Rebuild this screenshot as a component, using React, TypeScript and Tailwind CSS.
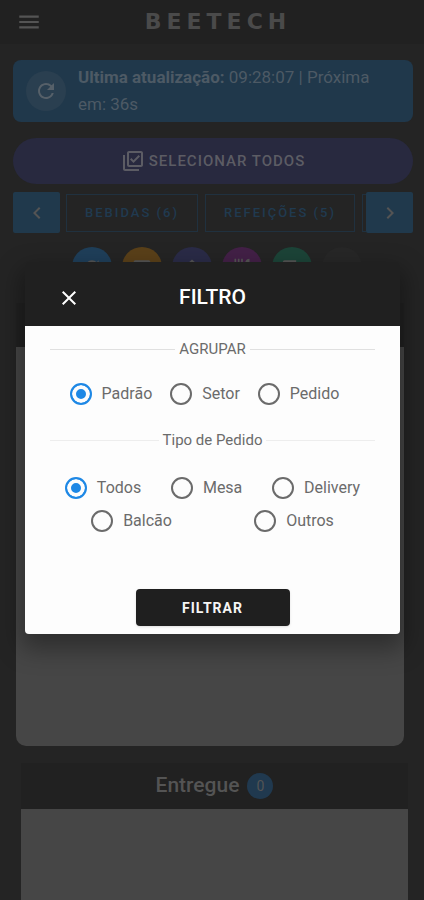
import { useState } from 'react';
import type { ReactNode } from 'react';
import {
  MdChevronLeft,
  MdChevronRight,
  MdClose,
  MdCreditCard,
  MdHome,
  MdLocalShipping,
  MdMenu,
  MdMoreHoriz,
  MdOutlineLibraryAddCheck,
  MdRefresh,
  MdRestaurant,
} from 'react-icons/md';

const shortcuts = [
  { label: 'Atualizar', color: 'bg-[#1f3f5a]', icon: MdRefresh },
  { label: 'Pagamentos', color: 'bg-[#5a4019]', icon: MdCreditCard },
  { label: 'Início', color: 'bg-[#2a2b47]', icon: MdHome },
  { label: 'Refeições', color: 'bg-[#432047]', icon: MdRestaurant },
  { label: 'Entregas', color: 'bg-[#1c4438]', icon: MdLocalShipping },
  { label: 'Mais', color: 'bg-[#272727]', icon: MdMoreHoriz },
];

function Tab({ children }: { children: ReactNode }) {
  return (
    <button className="h-[38px] shrink-0 border border-[#20313f] px-[18px] text-[13px] font-medium tracking-[2px] whitespace-nowrap text-[#203a50]">
      {children}
    </button>
  );
}

type RadioProps = {
  name: string;
  label: string;
  value: string;
  onChange: (value: string) => void;
};

function Radio({ name, label, value, onChange }: RadioProps) {
  return (
    <label className="flex h-[33px] items-center gap-[10px]">
      <input
        type="radio"
        name={name}
        checked={value === label}
        onChange={() => onChange(label)}
        className="size-[22px] appearance-none rounded-full border-2 border-[#6b6b6b] checked:border-[#1e88e5] checked:bg-[#1e88e5] checked:shadow-[inset_0_0_0_4px_#fdfdfd]"
      />
      {label}
    </label>
  );
}

function Legend({ children, line }: { children: ReactNode; line: string }) {
  return (
    <legend className="flex h-[22px] w-full items-center gap-1 text-[15px]">
      <span className={`h-px flex-1 ${line}`} />
      {children}
      <span className={`h-px flex-1 ${line}`} />
    </legend>
  );
}

function FilterDialog() {
  const [group, setGroup] = useState('Padrão');
  const [type, setType] = useState('Todos');

  return (
    <div className="fixed inset-0 flex items-center justify-center pr-6 pb-1 pl-[25px]">
      <div
        role="dialog"
        aria-labelledby="filter-title"
        className="w-full max-w-lg rounded-sm shadow-[0_11px_24px_4px_rgba(0,0,0,0.35)]"
      >
        <header className="grid h-16 grid-cols-3 items-center rounded-t-sm bg-[#202020] px-8 pt-2 text-white">
          <button aria-label="Fechar" className="justify-self-start">
            <MdClose className="size-6" />
          </button>
          <h2 id="filter-title" className="text-center text-[21px] font-medium">
            FILTRO
          </h2>
        </header>
        <form
          onSubmit={(e) => e.preventDefault()}
          className="flex flex-col rounded-b-sm bg-[#fdfdfd] px-[25px] pt-3 pb-2 text-[#6b6b6b]"
        >
          <fieldset>
            <Legend line="bg-[#e0e0e0]">AGRUPAR</Legend>
            <div className="mt-[17px] flex justify-center gap-[18px] pr-4">
              {['Padrão', 'Setor', 'Pedido'].map((o) => (
                <Radio key={o} name="group" label={o} value={group} onChange={setGroup} />
              ))}
            </div>
          </fieldset>
          <fieldset className="mt-[19px]">
            <Legend line="bg-[#ededed]">Tipo de Pedido</Legend>
            <div className="mt-5 flex justify-around">
              {['Todos', 'Mesa', 'Delivery'].map((o) => (
                <Radio key={o} name="type" label={o} value={type} onChange={setType} />
              ))}
            </div>
            <div className="flex justify-around">
              {['Balcão', 'Outros'].map((o) => (
                <Radio key={o} name="type" label={o} value={type} onChange={setType} />
              ))}
            </div>
          </fieldset>
          <button
            type="submit"
            className="mt-[52px] h-[37px] w-[154px] self-center rounded-sm bg-[#1f1f1f] text-sm font-bold tracking-[1px] text-[#f5f5f5] shadow"
          >
            FILTRAR
          </button>
        </form>
      </div>
    </div>
  );
}

export default function App() {
  return (
    <div className="font-[Roboto,sans-serif]">
      <div className="flex h-screen flex-col overflow-hidden bg-[#242424] text-[#545454]">
        <header className="grid h-11 shrink-0 grid-cols-[24px_1fr_24px] items-center bg-[#212121] px-4">
          <button aria-label="Menu">
            <MdMenu className="size-[26px]" />
          </button>
          <h1 className="pl-3 text-center font-['DejaVu_Sans',sans-serif] text-[22px] leading-6 font-bold tracking-[5px] text-[#4a4a4a]">
            BEETECH
          </h1>
        </header>

        <main className="flex min-h-0 flex-1 flex-col pt-4">
          <div className="mr-[11px] ml-[13px] flex shrink-0 items-center gap-3 rounded-lg bg-[#20384b] py-1 pr-9 pl-[13px]">
            <button
              aria-label="Atualizar"
              className="flex size-10 shrink-0 items-center justify-center rounded-full bg-[#2a3f50]"
            >
              <MdRefresh className="size-6 text-[#566069]" />
            </button>
            <p className="text-[17px] leading-[27px] text-[#4d5a65]">
              <b>Ultima atualização:</b> 09:28:07 | Próxima em: 36s
            </p>
          </div>

          <button className="mr-[11px] ml-[13px] mt-4 flex h-[46px] shrink-0 items-center justify-center gap-1 rounded-full bg-[#28293f] text-[15px] font-medium tracking-[1px] text-[#5c5c64]">
            <MdOutlineLibraryAddCheck className="size-6" />
            SELECIONAR TODOS
          </button>

          <nav className="mr-[11px] ml-[13px] mt-2 flex h-[41px] shrink-0 items-stretch">
            <button
              aria-label="Anterior"
              className="flex w-[47px] shrink-0 items-center justify-center rounded-xs bg-[#20394c]"
            >
              <MdChevronLeft className="size-6" />
            </button>
            <div className="flex min-w-0 flex-1 items-center gap-[7px] overflow-hidden pl-[6px]">
              <Tab>BEBIDAS (6)</Tab>
              <Tab>REFEIÇÕES (5)</Tab>
              <button
                aria-label="Próxima categoria"
                className="h-[38px] w-32 shrink-0 border border-[#20313f]"
              />
            </div>
            <button
              aria-label="Próximo"
              className="flex w-[47px] shrink-0 items-center justify-center rounded-xs bg-[#20394c]"
            >
              <MdChevronRight className="size-6" />
            </button>
          </nav>

          <div className="mt-[14px] flex shrink-0 justify-center gap-[10px] pl-[10px]">
            {shortcuts.map(({ label, color, icon: Icon }) => (
              <button
                key={label}
                aria-label={label}
                className={`flex size-10 items-center justify-center rounded-full ${color}`}
              >
                <Icon className="size-5" />
              </button>
            ))}
          </div>

          <section className="mt-4 mr-5 ml-4 shrink-0">
            <div className="h-11 bg-[#212121]" />
            <div className="h-[399px] rounded-b-[10px] bg-[#464646]" />
          </section>

          <section className="mt-[17px] mr-4 ml-[21px] flex min-h-0 flex-1 flex-col">
            <h2 className="flex h-[46px] shrink-0 items-center justify-center gap-2 bg-[#212121] text-[21px] font-medium">
              Entregue
              <span className="flex size-[26px] items-center justify-center rounded-full bg-[#20394f] text-sm font-normal">
                0
              </span>
            </h2>
            <div className="flex-1 bg-[#464646]" />
          </section>
        </main>
      </div>

      <FilterDialog />
    </div>
  );
}
